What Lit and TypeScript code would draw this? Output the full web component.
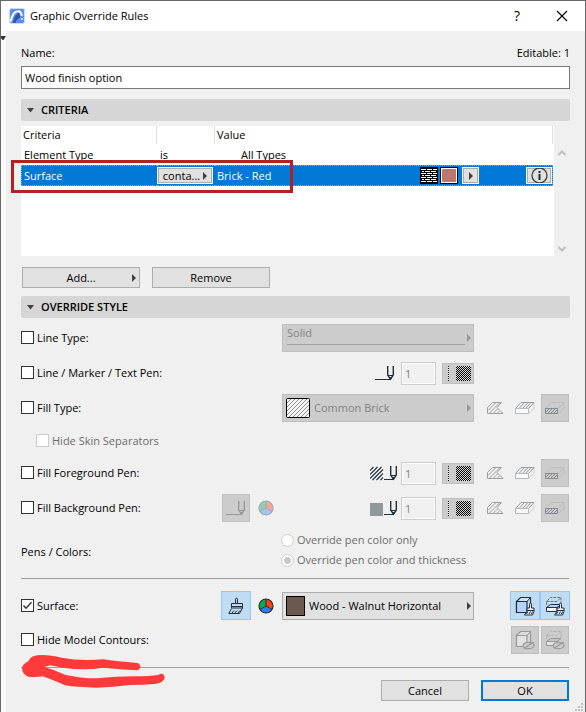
import { LitElement, html, svg, css } from "lit";
import { customElement, property } from "lit/decorators.js";

const INK = "#1f303c";

const pen = (x: number, lineStart: number, color = INK) => svg`
  <g fill="none" stroke=${color} stroke-width="1.4">
    <path d="M${lineStart} 14.5H${x + 4}" stroke-width="1"></path>
    <path d="M${x + 0.7} 1V10L${x + 3.5} 14.3L${x + 6.3} 10V1"></path>
    <path d="M${x + 1} 10.5h5" stroke-width="1"></path>
    <path d="M${x + 2.5} 12.5h2L${x + 3.5} 14z" fill=${color} stroke-width="1"></path>
  </g>`;

const penIcon = (width: number, color = INK) => html`
  <svg width=${width} height="16" viewBox="0 0 ${width} 16" aria-hidden="true">${pen(12, 0, color)}</svg>`;

const hatchPenIcon = html`
  <svg width="27" height="16" viewBox="0 0 27 16" aria-hidden="true">
    <path d="M0 5.5L3.5 2M0 9.5L7.5 2M0 13.5L11.5 2M2.5 15L13 4.5M6.5 15L13 8.5M10.5 15L13 12.5"
      stroke=${INK} stroke-width="1.1" fill="none"></path>
    ${pen(20, 14)}
  </svg>`;

const solidPenIcon = html`
  <svg width="27" height="16" viewBox="0 0 27 16" aria-hidden="true">
    <rect x="0" y="3" width="13" height="13" fill="#92979a"></rect>
    ${pen(20, 14)}
  </svg>`;

const patternIcon = html`
  <svg width="30" height="19" viewBox="0 0 30 19" shape-rendering="crispEdges" aria-hidden="true">
    <defs>
      <pattern id="checker" width="2" height="2" patternUnits="userSpaceOnUse">
        <rect width="2" height="2" fill="#d8d8d8"></rect>
        <rect width="1" height="1" fill="#000"></rect>
        <rect x="1" y="1" width="1" height="1" fill="#000"></rect>
      </pattern>
    </defs>
    <path d="M5.5 2V17" stroke="#fff"></path>
    <path d="M5.5 2V17" stroke="#000" stroke-dasharray="1 1"></path>
    <rect x="13" y="2" width="15" height="15" fill="url(#checker)"></rect>
  </svg>`;

const cutFillIcon = html`
  <svg width="20" height="14" viewBox="0 0 20 14" aria-hidden="true">
    <g fill="none" stroke="#9b9fa2">
      <path d="M2.5 12.5V6.5L7.5 1.5H16.5L12 6.5L18 12.5z"></path>
      <path d="M3 9.5L11 1.5M4 12.5L14.5 2M8 12.5L12.5 8M12 12.5L14.5 10"></path>
    </g>
  </svg>`;

const coverFillIcon = html`
  <svg width="20" height="14" viewBox="0 0 20 14" aria-hidden="true">
    <g fill="none" stroke="#9b9fa2">
      <path d="M13.5 12.5L19 7.5V1.5" stroke="#cfcfcf"></path>
      <path d="M.5 7.5L6 1.5H19L13.5 7.5z"></path>
      <path d="M4 7.5L9.5 1.5M7.5 7.5L13 1.5M10.5 7.5L16 1.5"></path>
      <path d="M.5 7.5h13v5H.5z" fill="#fafafa" stroke="#b8bbbd"></path>
    </g>
  </svg>`;

const draftFillIcon = html`
  <svg width="20" height="14" viewBox="0 0 20 14" aria-hidden="true">
    <g fill="none">
      <path d="M.5 7.5L6 1.5H19V7.5L13.5 12.5M13.5 7.5L19 1.5" stroke="#bdbdbd"></path>
      <path d="M.5 7.5h12v5H.5z" stroke="#868b8f"></path>
      <path d="M1 11L4.5 7.5M2.5 12.5L7.5 7.5M5.5 12.5L10.5 7.5M8.5 12.5L12.5 8.5" stroke="#868b8f"></path>
    </g>
  </svg>`;

const wheel = (faded: boolean) => {
  const c = faded ? ["#92cfab", "#f3a799", "#a6c4f7", "#a2a9b0"] : ["#12a54a", "#fb4012", "#2f7df6", "#1d3040"];
  return html`
    <svg width="16" height="16" viewBox="0 0 16 16" aria-hidden="true">
      <path d="M8 8V1A7 7 0 0 0 2 11.5z" fill=${c[0]}></path>
      <path d="M8 8V1A7 7 0 0 1 14 11.5z" fill=${c[1]}></path>
      <path d="M8 8L2 11.5A7 7 0 0 0 14 11.5z" fill=${c[2]}></path>
      <path d="M8 1V8L2 11.5M8 8L14 11.5" stroke=${c[3]} fill="none"></path>
      <circle cx="8" cy="8" r="7" fill="none" stroke=${c[3]} stroke-width="1.2"></circle>
    </svg>`;
};

const brushIcon = html`
  <svg width="16" height="18" viewBox="0 0 16 18" aria-hidden="true">
    <g fill="none" stroke=${INK}>
      <path d="M7.5 6V2.2a1 1 0 0 1 2 0V6"></path>
      <path d="M3.5 11V6.5H14.5V11z"></path>
      <path d="M4 9.5H14"></path>
      <path d="M3.5 11.5L.8 16.5H11.5L14.5 11"></path>
      <path d="M4 16L6 13.5M7 16L9 13.5M10 16L12 13.5"></path>
    </g>
  </svg>`;

const smallBrush = svg`
  <path d="M14.5 12V8.2a1 1 0 0 1 2 0V12H19V15.5L17.5 19H9.5L12 15.5V12z" fill="#eaf3fc" stroke=${INK}></path>
  <path d="M12 14.5H19M11.5 18L13 15.5M14 18L15.5 15.5M16.5 18L17.5 15.5" stroke=${INK} fill="none"></path>`;

const noSign = svg`
  <ellipse cx="13.500" cy="15.5" rx="5.5" ry="3.2" fill="#cccccc" stroke="#969a9d" stroke-width="1.3"></ellipse>
  <path d="M9 18.5L18.5 12" stroke="#969a9d" stroke-width="1.3"></path>`;

const cubeIcon = (off: boolean) => {
  const s = off ? "#969a9d" : INK;
  return html`
    <svg width="20" height="20" viewBox="0 0 20 20" aria-hidden="true">
      <path d="M1.5 5.5L5.5 1.5H15.5V12L12 16.5H1.5z" fill=${off ? "#dcdcdc" : "#cfe2fa"} stroke=${s} stroke-width="1.2"></path>
      <path d="M1.5 5.5H12V16.5H1.5z" fill=${off ? "#e2e2e2" : "#b4d3ff"} stroke=${s} stroke-width="1.2"></path>
      <path d="M12 5.5L15.5 1.5" stroke=${s} fill="none"></path>
      ${off ? noSign : smallBrush}
    </svg>`;
};

const slabIcon = (off: boolean) => {
  const s = off ? "#969a9d" : INK;
  return html`
    <svg width="20" height="20" viewBox="0 0 20 20" aria-hidden="true">
      <path d="M1.5 9V5.5L5.5 1.5H16M1.5 5.5H12L16 1.5V8" fill="none" stroke=${off ? "#b4b4b4" : "#6b7880"} stroke-dasharray="3 1"></path>
      <path d="M1.5 11.5L5.5 8.5H16L12 11.5z" fill=${off ? "#c4c4c4" : "#b4d3ff"} stroke=${s}></path>
      <path d="M1.5 11.5H12V15.5H1.5z" fill=${off ? "#e6e6e6" : "#fff"} stroke=${s}></path>
      ${off ? noSign : smallBrush}
    </svg>`;
};

const arrow = html`
  <svg class="arrow" width="4" height="8" viewBox="0 0 4 8" aria-hidden="true"><path d="M0 0L4 4L0 8z" fill="currentColor"></path></svg>`;

@customElement("section-bar")
export class SectionBar extends LitElement {
  @property() heading = "";
  static styles = css`
    :host { display: block; }
    .bar {
      display: flex; align-items: center; gap: 7px; width: 100%; height: 22px; padding: 0 6px;
      border: 0; border-radius: 2px; background: #d6d6d6; color: #000;
      font: 600 11px/16px "Open Sans", "Noto Sans", sans-serif;
    }
  `;
  render() {
    return html`<button class="bar" aria-expanded="true">
      <svg width="7" height="5" viewBox="0 0 7 5" aria-hidden="true"><path d="M0 0H7L3.5 4.5z" fill="#404040"></path></svg>
      <span>${this.heading}</span>
    </button>`;
  }
}

@customElement("app-root")
export class AppRoot extends LitElement {
  static styles = css`
    * { box-sizing: border-box; }
    :host {
      display: block; box-sizing: border-box; min-height: 100vh; background: #f0f0f0; color: #000;
      border: 1px solid #696969; border-bottom: 0;
      font: 11px/16px "Open Sans", "Noto Sans", sans-serif;
    }
    svg { display: block; flex: none; }
    button, input, select { font: inherit; color: inherit; margin: 0; border-radius: 0; }
    button { padding: 0; }
    .title { display: flex; align-items: center; height: 30px; background: #fff; padding: 0 17px 0 8px; gap: 5px; }
    .title h1 { margin: 0; flex: 1; font: inherit; }
    .sys { border: 0; background: none; width: 12px; height: 20px; display: grid; place-items: center; font-size: 14px; }
    .sys + .sys { margin-left: 28px; }
    .body { position: relative; border-left: 5px solid #f9f9f9; padding: 13px 15px 11px; }
    .edge { position: absolute; left: -5px; top: 5px; }
    .name { display: flex; justify-content: space-between; line-height: 18px; margin-bottom: 4px; }
    .field { display: block; width: 100%; height: 23px; border: 1px solid #7a7a7a; background: #fff; padding: 0 3px; outline: 0; }
    .head1 { margin: 10px 0 5px; }
    .head2 { margin: 8px 0 6px; }

    .list { position: relative; display: flex; height: 130px; }
    .sheet { flex: 1; min-width: 0; background: #fff; padding-right: 1px; }
    table { width: 100%; border-collapse: separate; border-spacing: 0; table-layout: fixed; }
    th, td { padding: 0; text-align: left; font-weight: 400; white-space: nowrap; }
    th { height: 18px; line-height: 18px; padding-left: 2px; border-right: 1px solid #e0e0e0; }
    td { height: 21px; padding-left: 3px; }
    .c1 { width: 136px; }
    .c2 { width: 58px; }
    .indent { padding-left: 26px; }
    .sel td { background: #0078d7; color: #fff; border: dotted #e8903c; border-width: 1px 0; }
    .sel td:first-child { border-left-width: 1px; padding-left: 2px; }
    .sel td:last-child { border-right-width: 1px; }
    .sel .op { padding: 0; }
    .sel .end { padding: 0 0 0 2px; }
    .value { display: flex; align-items: center; height: 19px; }
    .value .txt { flex: 1; }
    .chip {
      display: flex; align-items: center; justify-content: center; height: 15px; color: #000;
      background: #e1e1e1; border: 1px solid #adadad; outline: 1px solid #f4f4f4; outline-offset: 0;
    }
    .op .chip { width: 54px; margin: 0 1px; gap: 3px; }
    .chip.go { width: 15px; margin: 0 49px 0 5px; }
    .chip.info { width: 24px; margin-right: 1px; }
    .chip.info svg { margin: -2px; }
    .swatches { display: flex; gap: 2px; }
    .arrow { color: #404040; }
    .scroll { width: 16px; display: flex; flex-direction: column; justify-content: space-between; align-items: center; padding: 24px 0 4px; }
    .callout { position: absolute; left: -10px; top: 34px; width: 282px; height: 33px; border: 3px solid #b22222; pointer-events: none; }

    .btns { display: flex; gap: 12px; padding: 0 1px; margin-top: 11px; }
    .btn { position: relative; width: 118px; height: 21px; border: 1px solid #adadad; background: #e1e1e1; }
    .btn .arrow { position: absolute; right: 3px; top: 6px; }

    .rows { display: grid; gap: 7px; }
    .surface { gap: 6px; margin: 12px 0 13px; }
    .row { display: grid; grid-template-columns: minmax(0, 1fr) 30px 31px 192px 96px; height: 28px; align-items: center; }
    .row > :nth-child(5) { justify-self: end; }
    .row.tall { height: 29px; }
    .row.low { height: 23px; padding-left: 15px; }
    .row.duo { height: 40px; margin: 1px 0 8px; }
    .caption { padding-top: 4px; }
    .check { display: flex; align-items: flex-start; gap: 3px; line-height: 14px; white-space: nowrap; }
    .check input { appearance: none; flex: none; width: 13px; height: 13px; border: 1px solid #333; background: #fff; }
    .check input:disabled { border-color: #ccc; }
    .check input:disabled + span { color: #6d6d6d; }
    .check.radio { align-items: center; height: 20px; margin-left: -1px; }
    .check.radio input { border-radius: 50%; }
    .check.radio input:checked { background: radial-gradient(circle, #c8c8c8 0 3px, #fff 4px); }
    .check .on { background: #fff url("data:image/svg+xml,%3Csvg xmlns='http://www.w3.org/2000/svg' viewBox='0 0 11 11'%3E%3Cpath d='M1.5 5.5L4 8.2L9.5 2.2' fill='none' stroke='%23333' stroke-width='1.3'/%3E%3C/svg%3E"); }
    .center { justify-self: center; }
    .wheel { justify-self: center; padding-right: 2px; }
    .tool { display: grid; place-items: center; width: 28px; height: 28px; border: 1px solid #bfbfbf; background: #ccc; }
    .tool.active { width: 30px; height: 29px; border-color: #91c9f7; background: #c0dcf3; }
    .flat { display: grid; place-items: center; width: 28px; height: 28px; border: 0; background: none; }
    .set { display: grid; grid-template-columns: repeat(3, 30px); justify-items: center; align-items: center; }
    .pens { display: flex; align-items: center; justify-content: flex-end; gap: 4px; }
    .pens input { width: 35px; height: 23px; border: 1px solid #ccc; background: #f0f0f0; outline: 0; padding: 0 3px; color: #838383; box-shadow: inset 0 0 0 1px #fff; }
    .pat { width: 32px; height: 21px; border: 1px solid #bfbfbf; background: #ccc; margin-left: 2px; }
    .drop { position: relative; height: 28px; }
    .drop select { appearance: none; width: 100%; height: 28px; border: 1px solid #adadad; background: #e1e1e1; padding: 0 14px 0 26px; opacity: 1; }
    .drop select:disabled { background: #ccc; border-color: #bfbfbf; color: #838383; }
    .drop select:disabled ~ .arrow { color: #999; }
    .drop .arrow { position: absolute; right: 3px; top: 10px; pointer-events: none; }
    .drop .pic { position: absolute; left: 4px; top: 4px; pointer-events: none; }
    .drop.solid select { padding: 0 14px 10px 4px; }
    .drop.fill select { padding-left: 31px; }
    .drop .rule { position: absolute; left: 5px; right: 9px; bottom: 7px; height: 1px; background: #a0a0a0; pointer-events: none; }
    .line { position: relative; height: 1px; background: #a0a0a0; margin-right: 1px; }
    .scribble { position: absolute; left: -1px; top: -14px; pointer-events: none; }
    .final { display: flex; justify-content: flex-end; gap: 12px; padding-right: 1px; margin-top: 12px; }
    .final .btn { width: 88px; }
    .final .primary { border: 2px solid #0078d7; }
    .grip { position: absolute; right: 2px; bottom: 1px; }
  `;

  private check(label: string, opts: { on?: boolean; off?: boolean } = {}) {
    return html`<label class="check">
      <input type="checkbox" class=${opts.on ? "on" : ""} ?checked=${opts.on} ?disabled=${opts.off} /><span>${label}</span>
    </label>`;
  }

  private pens(icon: unknown, label: string) {
    return html`<div class="pens">
      ${icon}<input type="text" value="1" disabled aria-label=${label} />
      <button class="pat" disabled aria-label="${label} color">${patternIcon}</button>
    </div>`;
  }

  private fills() {
    return html`<div class="set">
      <button class="flat" disabled aria-label="Cut fills">${cutFillIcon}</button>
      <button class="flat" disabled aria-label="Cover fills">${coverFillIcon}</button>
      <button class="tool" disabled aria-label="Drafting fills">${draftFillIcon}</button>
    </div>`;
  }

  private penRow(label: string, icon: unknown, extra: boolean) {
    return html`<div class="row">
      ${this.check(label)}
      ${extra
        ? html`<button class="tool center" disabled aria-label="Pen">${penIcon(20, "#969a9d")}</button><span class="wheel">${wheel(true)}</span>`
        : html`<span></span><span></span>`}
      ${this.pens(icon, label)} ${this.fills()}
    </div>`;
  }

  private chevron(up: boolean) {
    return html`<svg width="8" height="6" viewBox="0 0 8 6" aria-hidden="true">
      <path d=${up ? "M.5 5L4 1.5L7.5 5" : "M.5 1L4 4.5L7.5 1"} fill="none" stroke="#bfbfbf" stroke-width="2"></path></svg>`;
  }

  render() {
    return html`
      <header class="title">
        <svg width="16" height="16" viewBox="0 0 16 16" aria-hidden="true">
          <rect x=".5" y=".5" width="15" height="15" rx="2" fill="#5b8df2" stroke="#d5dbe6"></rect>
          <path d="M4 15C5 9 8 5 10 5C11 6 11 9 11 10C9 10 7 12 6.500 15z" fill="#2f55ab"></path>
          <path d="M1.8 13.5C3 7 6 3.2 9 3.2C11.500 3.2 12.500 5 12.800 8" fill="none" stroke="#fff" stroke-width="2"></path>
          <circle cx="13" cy="11" r="1" fill="#fff"></circle>
        </svg>
        <h1>Graphic Override Rules</h1>
        <button class="sys" aria-label="Help">?</button>
        <button class="sys" aria-label="Close">
          <svg width="12" height="12" viewBox="0 0 12 12"><path d="M1 1L11 11M11 1L1 11" stroke="#000" stroke-width="1.2"></path></svg>
        </button>
      </header>
      <main class="body">
        <svg class="edge" width="5" height="4" viewBox="0 0 5 4" aria-hidden="true"><path d="M0 0H5L2.5 4H1.5L0 2z" fill="#333"></path></svg>
        <div class="name"><label for="rule">Name:</label><span>Editable: 1</span></div>
        <input id="rule" class="field" type="text" value="Wood finish option" />
        <section-bar class="head1" heading="CRITERIA"></section-bar>
        <div class="list">
          <div class="sheet">
            <table>
              <thead><tr><th class="c1">Criteria</th><th class="c2"></th><th>Value</th></tr></thead>
              <tbody>
                <tr><td>Element Type</td><td>is</td><td class="indent">All Types</td></tr>
                <tr class="sel">
                  <td>Surface</td>
                  <td class="op"><button class="chip">conta... ${arrow}</button></td>
                  <td class="end"><div class="value">
                    <span class="txt">Brick - Red</span>
                    <span class="swatches">
                      <svg width="18" height="17" viewBox="0 0 18 17" shape-rendering="crispEdges" aria-hidden="true">
                        <rect width="18" height="17" fill="#000"></rect>
                        <path d="M1 2.5H17M1 6.5H17M1 10.5H17M1 14.5H17" stroke="#fff" stroke-dasharray="5 1"></path>
                        <path d="M2 4.5H17M2 8.5H17M2 12.5H17" stroke="#fff" stroke-dasharray="2 1 5 1 5 1"></path>
                      </svg>
                      <svg width="18" height="17" viewBox="0 0 18 17" aria-hidden="true">
                        <rect width="18" height="17" fill="#000"></rect>
                        <rect x="1" y="1" width="16" height="15" fill="#fff"></rect>
                        <rect x="2" y="2" width="14" height="13" rx="1" fill="#bc776c"></rect>
                      </svg>
                    </span>
                    <button class="chip go" aria-label="Choose surface">${arrow}</button>
                    <button class="chip info" aria-label="Info">
                      <svg width="17" height="17" viewBox="0 0 17 17"><circle cx="8.5" cy="8.5" r="7.5" fill="none" stroke="#36424b" stroke-width="1.3"></circle>
                        <path d="M8.5 4V6M8.5 7V13" stroke="#1f2b33" stroke-width="2"></path></svg>
                    </button>
                  </div></td>
                </tr>
              </tbody>
            </table>
          </div>
          <div class="scroll">${this.chevron(true)}${this.chevron(false)}</div>
          <div class="callout"></div>
        </div>
        <div class="btns"><button class="btn">Add...${arrow}</button><button class="btn">Remove</button></div>
        <section-bar class="head2" heading="OVERRIDE STYLE"></section-bar>
        <div class="rows">
          <div class="row">
            ${this.check("Line Type:")}<span></span><span></span>
            <div class="drop solid"><select disabled aria-label="Line Type"><option>Solid</option></select><span class="rule"></span>${arrow}</div>
          </div>
          <div class="row">
            ${this.check("Line / Marker / Text Pen:")}<span></span><span></span>
            ${this.pens(penIcon(22), "Line pen")}
          </div>
          <div class="row">
            ${this.check("Fill Type:")}<span></span><span></span>
            <div class="drop fill">
              <select disabled aria-label="Fill Type"><option>Common Brick</option></select>
              <svg class="pic" width="24" height="20" viewBox="0 0 24 20" aria-hidden="true">
                <rect x=".5" y=".5" width="23" height="19" rx="1" fill="#f4f4f4" stroke="#000"></rect>
                <path d="M1 5L5 1M1 9L9 1M1 13L13 1M1 17L17 1M3 19L21 1M7 19L23 3M11 19L23 7M15 19L23 11M19 19L23 15" stroke="#909090" fill="none"></path>
              </svg>${arrow}
            </div>
            ${this.fills()}
          </div>
          <div class="row low">${this.check("Hide Skin Separators", { off: true })}</div>
          ${this.penRow("Fill Foreground Pen:", hatchPenIcon, false)}
          ${this.penRow("Fill Background Pen:", solidPenIcon, true)}
          <div class="row duo" role="radiogroup" aria-label="Pens / Colors">
            <span class="caption">Pens / Colors:</span><span></span><span></span>
            <div>
              <label class="check radio"><input type="radio" name="pc" disabled /><span>Override pen color only</span></label>
              <label class="check radio"><input type="radio" name="pc" disabled checked /><span>Override pen color and thickness</span></label>
            </div>
          </div>
        </div>
        <div class="line"></div>
        <div class="rows surface">
          <div class="row tall">
            ${this.check("Surface:", { on: true })}
            <button class="tool active" aria-label="Paint surface">${brushIcon}</button>
            <span class="wheel">${wheel(false)}</span>
            <div class="drop">
              <select aria-label="Surface"><option>Wood - Walnut Horizontal</option></select>
              <svg class="pic" width="19" height="20" viewBox="0 0 19 20" aria-hidden="true"><rect x=".5" y=".5" width="18" height="19" fill="#6c594d" stroke="#000"></rect></svg>${arrow}
            </div>
            <div class="set">
              <span></span>
              <button class="tool active" aria-label="Uncut surfaces">${cubeIcon(false)}</button>
              <button class="tool active" aria-label="Cut surfaces">${slabIcon(false)}</button>
            </div>
          </div>
          <div class="row">
            ${this.check("Hide Model Contours:")}<span></span><span></span><span></span>
            <div class="set">
              <span></span>
              <button class="tool" disabled aria-label="Uncut contours">${cubeIcon(true)}</button>
              <button class="tool" disabled aria-label="Cut contours">${slabIcon(true)}</button>
            </div>
          </div>
        </div>
        <div class="line">
          <svg class="scribble" width="147" height="37" viewBox="60 234 441 111" aria-hidden="true">
            <path fill="#ff3a3a" d="M66 278Q68 268 85 259Q92 243 112 241Q140 237 185 248Q240 259 310 253Q350 259 412 264Q421 267 421 275Q420 285 410 286Q360 283 310 278Q250 287 190 278L150 271L133 276Q165 285 195 299Q240 310 290 310Q350 304 400 304Q450 304 475 300Q478 296 486 296Q495 299 494 310Q490 324 465 327Q430 330 390 330Q340 337 290 338Q230 337 195 331Q150 311 128 304Q105 308 85 305Q66 298 66 278z"></path>
          </svg>
        </div>
        <div class="final"><button class="btn">Cancel</button><button class="btn primary">OK</button></div>
        <svg class="grip" width="8" height="8" viewBox="0 0 8 8" aria-hidden="true">
          <path d="M6 0h2v2H6zM3 3h2v2H3zM6 3h2v2H6zM0 6h2v2H0zM3 6h2v2H3zM6 6h2v2H6z" fill="#bfbfbf"></path>
        </svg>
      </main>`;
  }
}
